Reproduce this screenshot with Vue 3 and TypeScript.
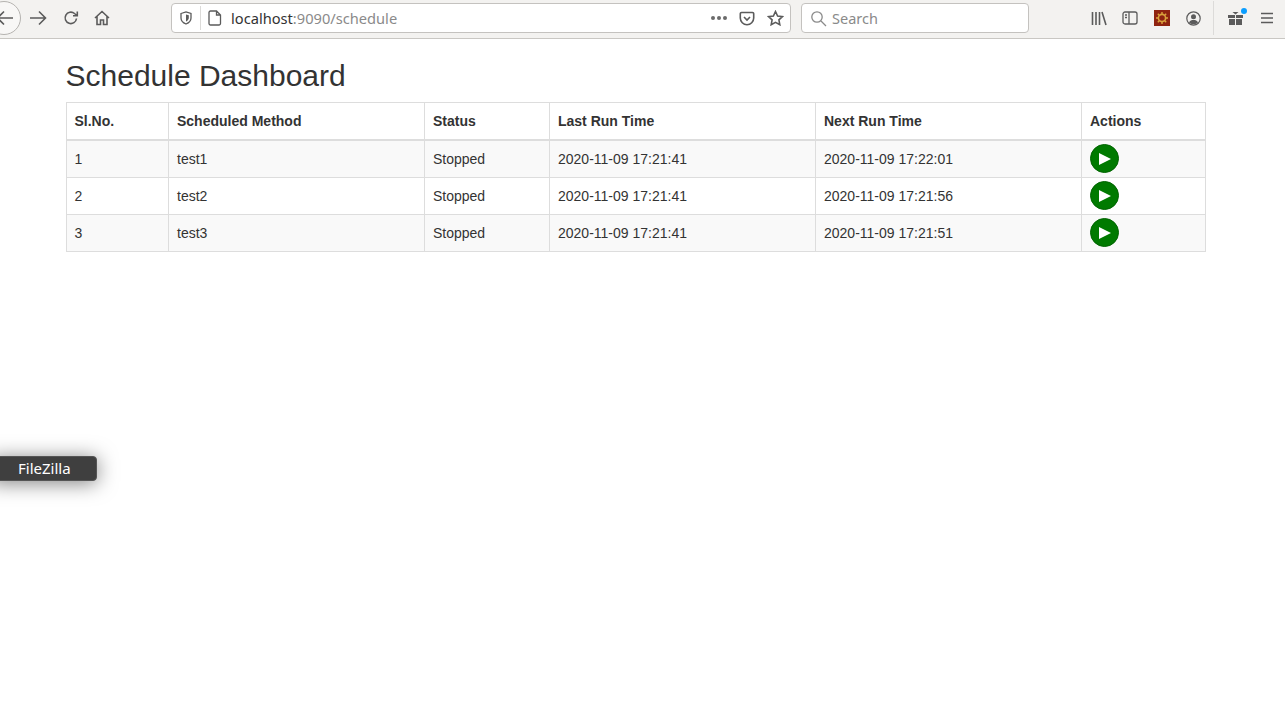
<script setup lang="ts">
interface Job { id: number; method: string; status: string; last: string; next: string }
const jobs: Job[] = [
  { id: 1, method: 'test1', status: 'Stopped', last: '2020-11-09 17:21:41', next: '2020-11-09 17:22:01' },
  { id: 2, method: 'test2', status: 'Stopped', last: '2020-11-09 17:21:41', next: '2020-11-09 17:21:56' },
  { id: 3, method: 'test3', status: 'Stopped', last: '2020-11-09 17:21:41', next: '2020-11-09 17:21:51' },
]
</script>

<template>
  <div class="page">
    <header class="toolbar">
      <div class="back">
        <svg width="18" height="16" viewBox="0 0 18 16" class="ico"><path d="M8 1.5 1.5 8 8 14.500M2 8h15" /></svg>
      </div>
      <svg width="18" height="16" viewBox="0 0 18 16" class="ico fwd"><path d="M10 1.500 16.500 8 10 14.500M16 8H1" /></svg>
      <svg width="16" height="16" viewBox="0 0 16 16" class="ico reload"><path d="M13.500 8.500A5.700 5.700 0 1 1 11.500 3.500L14 5.500M14.300 1.500v4.300h-4.300" /></svg>
      <svg width="16" height="16" viewBox="0 0 16 16" class="ico home"><path d="M1 8 8 1.500 15 8M3 6.500V14.500h3.500V10h3v4.500H13V6.500" /></svg>

      <div class="urlbar">
        <svg width="14" height="14" viewBox="0 0 14 14" class="ico shield"><path d="M2 2.500 7 1l5 1.500V7c0 3-2.500 5-5 6-2.500-1-5-3-5-6z" /><path class="fill" d="M7 3.500 9.800 4.300V7c0 1.600-1.300 2.800-2.800 3.500z" /></svg>
        <span class="sep"></span>
        <svg width="14" height="16" viewBox="0 0 14 16" class="ico page-ico"><path d="M2.500 1h6l4 4v8.500a1.500 1.500 0 0 1-1.500 1.500H2.500A1.500 1.500 0 0 1 1 13.500v-11A1.500 1.500 0 0 1 2.500 1zM8.500 1v4h4" /></svg>
        <span class="url"><span class="host">localhost</span>:9090/schedule</span>
        <span class="dots"><i></i><i></i><i></i></span>
        <svg width="16" height="15" viewBox="0 0 16 15" class="ico pocket"><path d="M2.500 1.500h11A1.200 1.200 0 0 1 14.700 2.700V7A6.700 6.700 0 0 1 1.300 7V2.700A1.200 1.200 0 0 1 2.500 1.500z" /><path d="M5 6l3 3 3-3" /></svg>
        <svg width="17" height="16" viewBox="0 0 17 16" class="ico star"><path d="M8.500 1.500 10.600 6l4.900.6-3.600 3.300.9 4.800-4.300-2.400-4.300 2.400.9-4.800L1.500 6.600 6.400 6z" /></svg>
      </div>

      <div class="search">
        <svg width="17" height="17" viewBox="0 0 17 17" class="ico glass"><circle cx="7" cy="7" r="5.200" /><path d="M11 11l5 5" /></svg>
        <span>Search</span>
      </div>

      <div class="tools">
        <svg width="16" height="15" viewBox="0 0 16 15" class="ico library"><path d="M1.500 1v13M5 1v13M8.500 1v13M11 1l4 13" /></svg>
        <svg width="16" height="14" viewBox="0 0 16 14" class="ico sidebar"><rect x="1" y="1" width="14" height="12" rx="2" /><path d="M7 1v12M3 4h2M3 6.500h2" /></svg>
        <svg width="16" height="16" viewBox="0 0 16 16" class="ext"><rect width="16" height="16" fill="#8f2410" /><circle cx="8" cy="8" r="3.600" fill="none" stroke="#d9a23c" stroke-width="1.600" /><path d="M8 2v2.500M8 11.500V14M2 8h2.500M11.500 8H14M3.800 3.800l1.700 1.700M10.500 10.500l1.700 1.700M12.200 3.800l-1.700 1.700M5.500 10.500l-1.700 1.700" stroke="#d9a23c" stroke-width="1.400" /></svg>
        <svg width="15" height="15" viewBox="0 0 15 15" class="ico account"><circle cx="7.500" cy="7.500" r="6.700" /><circle class="fill" cx="7.500" cy="5.800" r="2.500" /><path class="fill" d="M3 11.500c1-2 2.500-2.500 4.500-2.500s3.500.5 4.500 2.500c-1 1-2.700 1.800-4.500 1.800S4 12.500 3 11.500z" /></svg>
        <span class="tool-sep"></span>
        <div class="gift">
          <svg width="15" height="15" viewBox="0 0 15 15"><path fill="#5b5b5b" d="M0 4h7v3H0zM8 4h7v3H8zM1 8h6v6H1zM8 8h6v6H8zM4.500 1h6L7.500 3.500z" /></svg>
          <span class="badge"></span>
        </div>
        <svg width="14" height="12" viewBox="0 0 14 12" class="ico menu"><path d="M1 1.500h12M1 6h12M1 10.500h12" /></svg>
      </div>
    </header>

    <main class="content">
      <h1>Schedule Dashboard</h1>
      <table>
        <colgroup>
          <col class="c1" /><col class="c2" /><col class="c3" /><col class="c4" /><col class="c5" /><col class="c6" />
        </colgroup>
        <thead>
          <tr>
            <th>Sl.No.</th>
            <th>Scheduled Method</th>
            <th>Status</th>
            <th>Last Run Time</th>
            <th>Next Run Time</th>
            <th>Actions</th>
          </tr>
        </thead>
        <tbody>
          <tr v-for="job in jobs" :key="job.id">
            <td>{{ job.id }}</td>
            <td>{{ job.method }}</td>
            <td>{{ job.status }}</td>
            <td>{{ job.last }}</td>
            <td>{{ job.next }}</td>
            <td class="action">
              <button class="play" type="button" aria-label="Start">
                <svg width="12" height="12" viewBox="0 0 12 12"><path fill="#fff" d="M0 0 12 6 0 12z" /></svg>
              </button>
            </td>
          </tr>
        </tbody>
      </table>
    </main>

    <div class="dock-tip">FileZilla</div>
  </div>
</template>

<style>
html, body { margin: 0; background: #fff; }
</style>

<style scoped>
.page {
  position: relative;
  height: 708px;
  overflow: hidden;
  background: #fff;
  font-family: "Liberation Sans", Arial, sans-serif;
  color: #333;
}
.toolbar {
  height: 36px;
  padding-bottom: 2px;
  background: #f3f2f0;
  border-bottom: 1px solid #c9c7c3;
  display: flex;
  align-items: center;
  font-family: "Noto Sans", sans-serif;
  overflow: hidden;
}
.ico { fill: none; stroke: #5b5b5b; stroke-width: 1.600; flex: none; }
.ico .fill { fill: #5b5b5b; stroke: none; }
.back {
  width: 34px;
  height: 34px;
  margin-left: -13px;
  flex: none;
  border: 1px solid #b5b3b0;
  border-radius: 50%;
  background: #f8f7f6;
  display: flex;
  align-items: center;
  justify-content: center;
  box-sizing: border-box;
}
.back svg { margin-left: 2px; }
.fwd { margin-left: 8px; }
.reload { margin-left: 16px; }
.home { margin-left: 15px; }
.urlbar {
  width: 620px;
  height: 30px;
  margin-left: 61px;
  box-sizing: border-box;
  flex: none;
  background: #fff;
  border: 1px solid #c4c2bf;
  border-radius: 4px;
  display: flex;
  align-items: center;
  padding-left: 7px;
}
.shield { stroke-width: 1.300; }
.sep { width: 1px; height: 24px; background: #dcdbd9; margin-left: 7px; flex: none; }
.page-ico { margin-left: 7px; stroke-width: 1.300; }
.url {
  margin-left: 9px;
  font-size: 14.650px;
  color: #8a8a8a;
  flex: 1;
  white-space: nowrap;
}
.host { color: #333; }
.dots { display: flex; gap: 2px; margin-right: 12px; }
.dots i { width: 4px; height: 4px; border-radius: 50%; background: #6b6b6b; display: block; }
.pocket { margin-right: 12px; }
.star { margin-right: 6px; }
.search {
  width: 228px;
  height: 30px;
  box-sizing: border-box;
  margin-left: 10px;
  flex: none;
  background: #fff;
  border: 1px solid #c4c2bf;
  border-radius: 4px;
  display: flex;
  align-items: center;
  padding-left: 8px;
  gap: 5px;
  font-size: 14.500px;
  color: #8a8a8a;
}
.glass { stroke: #8a8a8a; stroke-width: 1.300; }
.tools { display: flex; align-items: center; margin-left: 62px; flex: none; }
.sidebar { margin-left: 15px; stroke-width: 1.300; }
.ext { margin-left: 16px; flex: none; }
.account { margin-left: 16px; stroke-width: 1.200; }
.tool-sep { width: 1px; height: 34px; background: #dcdbd9; margin-left: 12px; flex: none; }
.gift { position: relative; margin-left: 14px; height: 15px; }
.gift svg { display: block; }
.badge {
  position: absolute;
  top: -3px;
  right: -4px;
  width: 6px;
  height: 6px;
  border-radius: 50%;
  background: #0a9eff;
}
.menu { margin-left: 17px; }

.content { padding: 0 79px 0 65.500px; }
h1 {
  margin: 20px 0 10px;
  font-size: 30px;
  font-weight: 500;
  line-height: 33px;
  color: #333;
}
table {
  width: 1139.500px;
  table-layout: fixed;
  border-collapse: collapse;
  font-size: 14px;
  line-height: 20px;
}
.c1 { width: 102.500px; }
.c2 { width: 256px; }
.c3 { width: 125px; }
.c4 { width: 266px; }
.c5 { width: 266px; }
.c6 { width: 124px; }
th, td {
  border: 1px solid #ddd;
  padding: 8px;
  text-align: left;
  vertical-align: top;
}
th { border-bottom-width: 2px; font-weight: 700; }
tbody tr:nth-child(odd) { background: #f9f9f9; }
td { height: 36px; box-sizing: border-box; }
.action { padding: 3px 8px; }
.play {
  width: 29px;
  height: 29px;
  padding: 0;
  display: flex;
  align-items: center;
  justify-content: center;
  background: #007a00;
  border: 1px solid #006400;
  border-radius: 50%;
  box-sizing: border-box;
}
.play svg { display: block; }
.dock-tip {
  position: absolute;
  left: -10px;
  top: 456px;
  width: 107px;
  height: 25px;
  box-sizing: border-box;
  padding-left: 27px;
  background: #3f3f3f;
  border: 1px solid #555;
  border-radius: 4px;
  box-shadow: 0 2px 20px rgba(0, 0, 0, 0.5);
  color: #fff;
  font-family: "Noto Sans", sans-serif;
  font-size: 15px;
  line-height: 23px;
}
</style>
